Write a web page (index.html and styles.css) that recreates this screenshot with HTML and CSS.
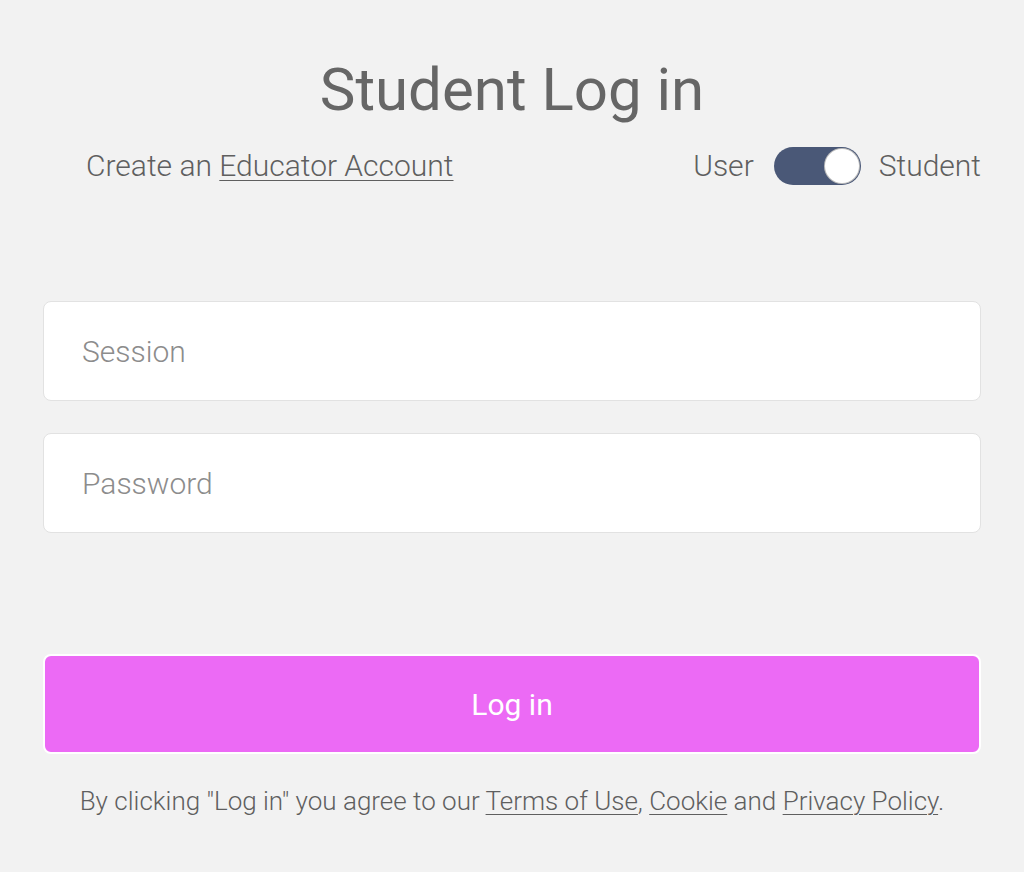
FILE: index.html
```html
<!DOCTYPE html>
<html>
<head>
<meta charset="utf-8">
<link rel="stylesheet" href="styles.css">
</head>
<body>
<main class="page">
  <h1 class="title">Student Log in</h1>
  <div class="subrow">
    <p class="create">Create an <a href="#">Educator Account</a></p>
    <div class="mode">
      <span class="mode-label">User</span>
      <span class="toggle"><span class="knob"></span></span>
      <span class="mode-label">Student</span>
    </div>
  </div>
  <form class="form">
    <input class="field" type="text" placeholder="Session">
    <input class="field" type="password" placeholder="Password">
    <button class="login" type="button">Log in</button>
  </form>
  <p class="terms">By clicking "Log in" you agree to our <a href="#">Terms of Use</a>, <a href="#">Cookie</a> and <a href="#">Privacy Policy</a>.</p>
</main>
</body>
</html>
```
FILE: styles.css
```css
html, body {
  margin: 0;
  padding: 0;
  background: #f2f2f2;
  font-family: Roboto, "Liberation Sans", sans-serif;
  color: #666;
}
.page {
  width: 938px;
  margin: 0 auto;
  padding-top: 52px;
}
.title {
  margin: 0;
  text-align: center;
  font-size: 60px;
  font-weight: 400;
  line-height: 76px;
  color: #666;
}
.subrow {
  display: flex;
  justify-content: space-between;
  align-items: center;
  margin-top: 18px;
  padding-left: 43px;
}
.create {
  margin: 0;
  font-size: 30px;
  font-weight: 300;
  line-height: 40px;
  color: #5f5f5f;
}
.create a, .terms a {
  color: inherit;
  text-decoration: underline;
  text-underline-offset: 4px;
  text-decoration-thickness: 1px;
}
.mode {
  display: flex;
  align-items: center;
}
.mode-label {
  font-size: 30px;
  font-weight: 300;
  line-height: 40px;
  color: #5f5f5f;
}
.toggle {
  display: flex;
  justify-content: flex-end;
  align-items: center;
  width: 87px;
  height: 38px;
  margin: 0 18px 0 20px;
  border-radius: 19px;
  background: #4a5877;
  padding: 2px;
  box-sizing: border-box;
}
.knob {
  width: 34px;
  height: 34px;
  border-radius: 50%;
  background: #fff;
  box-shadow: 0 0 0 1px #bdbdbd;
}
.form {
  display: flex;
  flex-direction: column;
  margin-top: 115px;
}
.field {
  box-sizing: border-box;
  height: 100px;
  width: 100%;
  border: 1px solid #e2e2e2;
  border-radius: 8px;
  background: #fff;
  padding: 0 38px;
  font-family: Roboto, "Liberation Sans", sans-serif;
  font-size: 30px;
  font-weight: 300;
  color: #555;
  outline: none;
}
.field + .field {
  margin-top: 32px;
}
.field::placeholder {
  color: #8c8c8c;
}
.login {
  margin-top: 121px;
  height: 100px;
  width: 100%;
  border: 2px solid #fff;
  border-radius: 8px;
  background: #ec6af5;
  color: #fff;
  font-family: Roboto, "Liberation Sans", sans-serif;
  font-size: 30px;
  font-weight: 400;
}
.terms {
  margin: 31px 0 0;
  text-align: center;
  font-size: 26px;
  font-weight: 300;
  line-height: 32px;
  color: #5f5f5f;
}
```
